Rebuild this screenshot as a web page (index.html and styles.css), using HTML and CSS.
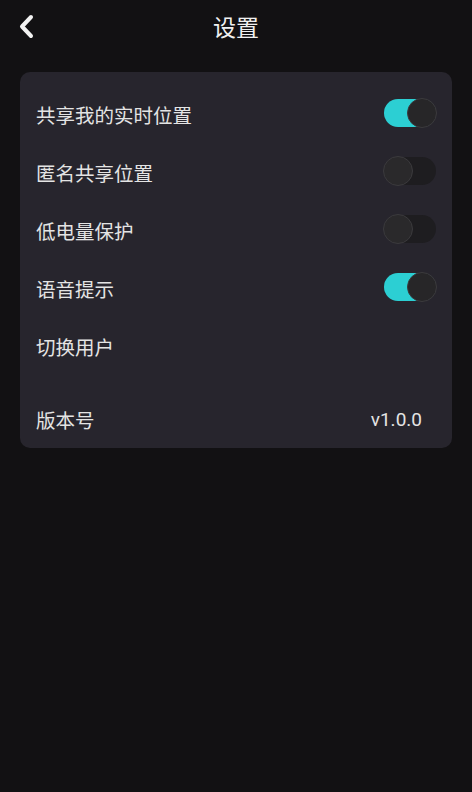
FILE: index.html
```html
<!DOCTYPE html>
<html lang="zh-CN">

<head>
    <meta charset="UTF-8" />
    <meta name="viewport" content="width=device-width, initial-scale=1.0" />
    <title>设置</title>
    <link rel="stylesheet" href="styles.css">
</head>

<body>

    <!-- 顶部栏 -->
    <div class="top-bar">
        <div class="back">
            <svg width="16" height="26" viewBox="0 0 16 26">
                <path d="M13 3 L4 12.5 L13 22" fill="none" stroke="#f2f2f2" stroke-width="4"
                    stroke-linecap="round" stroke-linejoin="round" />
            </svg>
        </div>
        <div class="title">设置</div>
    </div>

    <!-- 设置列表 -->
    <div class="card">
        <div class="row">
            <span>共享我的实时位置</span>
            <div class="switch on"><i></i></div>
        </div>
        <div class="row">
            <span>匿名共享位置</span>
            <div class="switch"><i></i></div>
        </div>
        <div class="row">
            <span>低电量保护</span>
            <div class="switch"><i></i></div>
        </div>
        <div class="row">
            <span>语音提示</span>
            <div class="switch on"><i></i></div>
        </div>
        <div class="row">
            <span>切换用户</span>
        </div>
        <div class="row version">
            <span>版本号</span>
            <span class="ver">v1.0.0</span>
        </div>
    </div>

</body>

</html>
```

FILE: styles.css
```css
body {
    margin: 0;
    padding: 0;
    background-color: #121113;
    font-family: "Noto Sans CJK SC", "Noto Sans", sans-serif;
    color: #e8e8e8;
    height: 792px;
}

.top-bar {
    height: 56px;
    display: flex;
    align-items: center;
    justify-content: center;
    position: relative;
}

.back {
    position: absolute;
    left: 18px;
    top: 14px;
}

.title {
    font-size: 23px;
    color: #f0f0f0;
    margin-top: -4px;
}

.card {
    margin: 16px 20px 0;
    background-color: #27252d;
    border-radius: 10px;
    padding: 14px 16px 0 16px;
}

.row {
    height: 58px;
    display: flex;
    align-items: center;
    justify-content: space-between;
    font-size: 19.5px;
    color: #e4e4e4;
}

.row span {
    margin-top: -2px;
}

.version {
    height: 72px;
    padding-top: 16px;
    box-sizing: border-box;
}

.ver {
    font-family: Roboto, "Liberation Sans", sans-serif;
    font-size: 19px;
    margin-right: 14px;
}

/* 开关 */
.switch {
    width: 52px;
    height: 28px;
    border-radius: 14px;
    background-color: #1e1d20;
    position: relative;
    margin-top: -4px;
}

.switch i {
    position: absolute;
    top: -1px;
    left: -1px;
    width: 28px;
    height: 28px;
    border-radius: 50%;
    background-color: #2a292b;
    border: 1px solid #3b3a3d;
}

.switch.on {
    background-color: #2ccfd3;
}

.switch.on i {
    left: auto;
    right: -1px;
    background-color: #272628;
}
```
